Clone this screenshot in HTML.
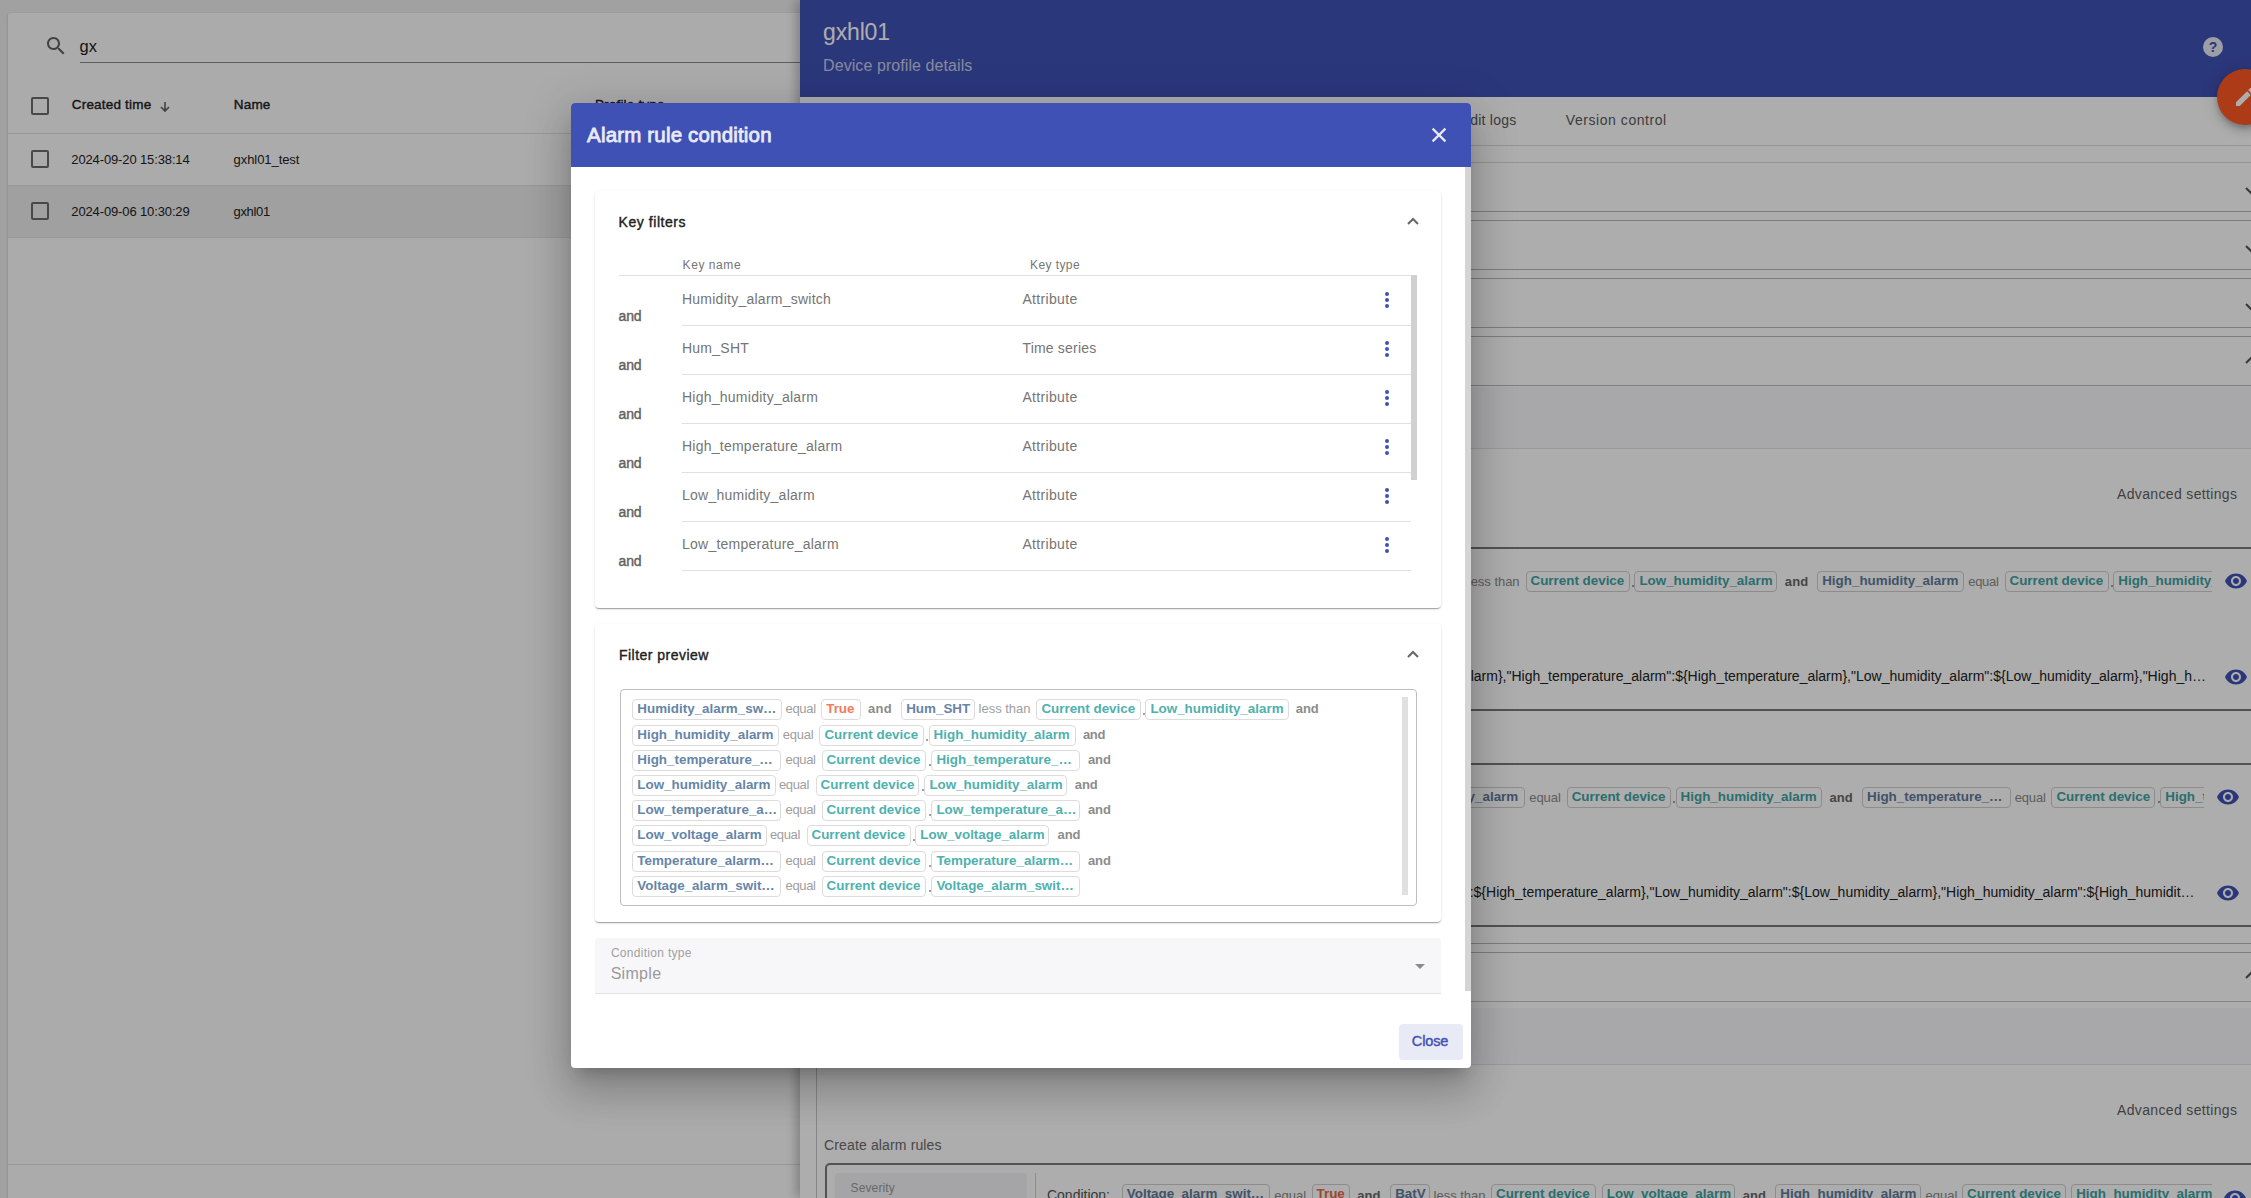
<!DOCTYPE html>
<html><head><meta charset="utf-8"><title>Alarm rule condition</title>
<style>
html,body{margin:0;padding:0;width:2251px;height:1198px;overflow:hidden;background:#eeeeee;}
body{position:relative;font-family:"Liberation Sans",sans-serif;}
div{box-sizing:border-box;white-space:nowrap;}
.c{position:absolute;height:21px;border:1px solid #dcdcdc;border-radius:4px;font-size:13.4px;font-weight:700;line-height:17px;padding-left:4px;overflow:hidden;box-sizing:border-box;}
.k{color:#6685a8;}
.v{color:#4fb1ae;}
.o{color:#f27b5d;}
.rk{color:#617b9a;border-color:#cfcfcf}
.rv{color:#3fa3a3;border-color:#cfcfcf}
.ro{color:#e8674a;border-color:#cfcfcf}
.dot{position:absolute;width:2px;height:2px;background:#a0a0a0}
</style></head><body>
<div style="position:absolute;left:8px;top:13px;width:800px;height:1200px;background:#fdfdfd;border-radius:2px;box-shadow:0 1px 3px rgba(0,0,0,.2)"></div>
<svg style="position:absolute;left:43.5px;top:34px" width="24" height="24" viewBox="0 0 24 24"><path fill="#616161" d="M15.5 14h-.79l-.28-.27C15.41 12.59 16 11.11 16 9.5 16 5.91 13.09 3 9.5 3S3 5.91 3 9.5 5.91 16 9.5 16c1.61 0 3.090-.59 4.23-1.57l.27.28v.79l5 4.99L20.49 19l-4.99-5zm-6 0C7.01 14 5 11.99 5 9.5S7.01 5 9.5 5 14 7.01 14 9.5 11.99 14 9.5 14z"/></svg>
<div style="position:absolute;left:79.61px;top:38.33px;font-size:16.5px;font-weight:400;line-height:16.5px;color:#212121;letter-spacing:0.000px;">gx</div>
<div style="position:absolute;left:80px;top:62px;width:720px;height:1px;background:#8a8a8a"></div>
<div style="position:absolute;left:31px;top:97px;width:18px;height:18px;border:2px solid #6b6b6b;border-radius:2px"></div>
<div style="position:absolute;left:71.79px;top:98.27px;font-size:13.5px;font-weight:400;line-height:13.5px;color:#212121;letter-spacing:0.191px;-webkit-text-stroke:0.38px #212121;">Created time</div>
<svg style="position:absolute;left:157px;top:99px" width="16" height="16" viewBox="0 0 16 16"><path d="M8 3v9M4 8l4 4 4-4" stroke="#616161" stroke-width="1.6" fill="none"/></svg>
<div style="position:absolute;left:233.79px;top:98.27px;font-size:13.5px;font-weight:400;line-height:13.5px;color:#212121;letter-spacing:0.195px;-webkit-text-stroke:0.38px #212121;">Name</div>
<div style="position:absolute;left:594.89px;top:98.27px;font-size:13.5px;font-weight:400;line-height:13.5px;color:#212121;letter-spacing:0.187px;-webkit-text-stroke:0.38px #212121;">Profile type</div>
<div style="position:absolute;left:8px;top:133px;width:792px;height:1px;background:#e0e0e0"></div>
<div style="position:absolute;left:31px;top:150px;width:18px;height:18px;border:2px solid #6b6b6b;border-radius:2px"></div>
<div style="position:absolute;left:71.32px;top:152.90px;font-size:13px;font-weight:400;line-height:13px;color:#212121;letter-spacing:-0.129px;">2024-09-20 15:38:14</div>
<div style="position:absolute;left:233.62px;top:152.90px;font-size:13px;font-weight:400;line-height:13px;color:#212121;letter-spacing:-0.070px;">gxhl01_test</div>
<div style="position:absolute;left:8px;top:185px;width:792px;height:1px;background:#e0e0e0"></div>
<div style="position:absolute;left:8px;top:186px;width:792px;height:51px;background:#ececec"></div>
<div style="position:absolute;left:31px;top:202px;width:18px;height:18px;border:2px solid #6b6b6b;border-radius:2px"></div>
<div style="position:absolute;left:71.32px;top:204.60px;font-size:13px;font-weight:400;line-height:13px;color:#212121;letter-spacing:-0.129px;">2024-09-06 10:30:29</div>
<div style="position:absolute;left:233.62px;top:204.60px;font-size:13px;font-weight:400;line-height:13px;color:#212121;letter-spacing:-0.362px;">gxhl01</div>
<div style="position:absolute;left:8px;top:237px;width:792px;height:1px;background:#e0e0e0"></div>
<div style="position:absolute;left:8px;top:1164px;width:792px;height:1px;background:#e0e0e0"></div>
<div style="position:absolute;left:800px;top:0px;width:1451px;height:1198px;background:#ffffff;box-shadow:-4px 0 10px rgba(0,0,0,.25)"></div>
<div style="position:absolute;left:800px;top:0px;width:1451px;height:97px;background:#3f51b5"></div>
<div style="position:absolute;left:823.02px;top:21.33px;font-size:23px;font-weight:400;line-height:23px;color:#ffffff;letter-spacing:-0.156px;">gxhl01</div>
<div style="position:absolute;left:823.04px;top:58.06px;font-size:16px;font-weight:400;line-height:16px;color:rgba(255,255,255,.72);letter-spacing:0.080px;">Device profile details</div>
<svg style="position:absolute;left:2201px;top:35px" width="24" height="24" viewBox="0 0 24 24"><circle cx="12" cy="12" r="10" fill="rgba(255,255,255,.88)"/><text x="12" y="17" text-anchor="middle" font-family="Liberation Sans" font-weight="bold" font-size="14" fill="#3f51b5">?</text></svg>
<div style="position:absolute;left:1452.66px;top:113.15px;font-size:14px;font-weight:400;line-height:14px;color:#5a5a5a;letter-spacing:0.224px;">Audit logs</div>
<div style="position:absolute;left:1565.86px;top:113.15px;font-size:14px;font-weight:400;line-height:14px;color:#5a5a5a;letter-spacing:0.549px;">Version control</div>
<div style="position:absolute;left:800px;top:145px;width:1451px;height:1px;background:#dadada"></div>
<div style="position:absolute;left:800px;top:162px;width:1451px;height:1px;background:#dadada"></div>
<div style="position:absolute;left:800px;top:211px;width:1451px;height:1px;background:#b8b8b8"></div>
<div style="position:absolute;left:800px;top:220px;width:1451px;height:1px;background:#b8b8b8"></div>
<div style="position:absolute;left:800px;top:269px;width:1451px;height:1px;background:#b8b8b8"></div>
<div style="position:absolute;left:800px;top:278px;width:1451px;height:1px;background:#b8b8b8"></div>
<div style="position:absolute;left:800px;top:327px;width:1451px;height:1px;background:#b8b8b8"></div>
<div style="position:absolute;left:800px;top:336px;width:1451px;height:1px;background:#b8b8b8"></div>
<div style="position:absolute;left:800px;top:385px;width:1451px;height:1px;background:#b8b8b8"></div>
<svg style="position:absolute;left:2243px;top:182px" width="16" height="16" viewBox="-8 -8 16 16"><path d="M-5 -2L0 3L5 -2" stroke="#555" stroke-width="2" fill="none"/></svg>
<svg style="position:absolute;left:2243px;top:240px" width="16" height="16" viewBox="-8 -8 16 16"><path d="M-5 -2L0 3L5 -2" stroke="#555" stroke-width="2" fill="none"/></svg>
<svg style="position:absolute;left:2243px;top:298px" width="16" height="16" viewBox="-8 -8 16 16"><path d="M-5 -2L0 3L5 -2" stroke="#555" stroke-width="2" fill="none"/></svg>
<svg style="position:absolute;left:2243px;top:352px" width="16" height="16" viewBox="-8 -8 16 16"><path d="M-5 3L0 -2L5 3" stroke="#555" stroke-width="2" fill="none"/></svg>
<div style="position:absolute;left:800px;top:387px;width:1451px;height:61px;background:#f8f8fb"></div>
<div style="position:absolute;left:800px;top:448px;width:1451px;height:1px;background:#e2e2e2"></div>
<div style="position:absolute;left:2117.06px;top:487.15px;font-size:14px;font-weight:400;line-height:14px;color:#5f5f5f;letter-spacing:0.343px;">Advanced settings</div>
<div style="position:absolute;left:800px;top:547px;width:1451px;height:2px;background:#7a7a7a"></div>
<div style="position:absolute;left:1400.80px;top:574.66px;font-size:13.4px;font-weight:700;line-height:13.4px;color:#617b9a;letter-spacing:0.000px;">Hum_SHT</div>
<div style="position:absolute;left:1467.82px;top:575.00px;font-size:13px;font-weight:400;line-height:13px;color:#8a8a8a;letter-spacing:-0.031px;">less than</div>
<div class="c rv" style="left:1525.5px;top:571px;width:104px;height:21px">Current device</div>
<div class="dot" style="left:1632px;top:585px"></div>
<div class="c rv" style="left:1634.4px;top:571px;width:143px;height:21px">Low_humidity_alarm</div>
<div style="position:absolute;left:1784.82px;top:575.00px;font-size:13px;font-weight:700;line-height:13px;color:#666666;letter-spacing:0.088px;">and</div>
<div class="c rk" style="left:1817.2px;top:571px;width:147px;height:21px">High_humidity_alarm</div>
<div style="position:absolute;left:1968.22px;top:575.00px;font-size:13px;font-weight:400;line-height:13px;color:#8a8a8a;letter-spacing:-0.278px;">equal</div>
<div class="c rv" style="left:2004.5px;top:571px;width:104px;height:21px">Current device</div>
<div class="dot" style="left:2111px;top:585px"></div>
<div style="position:absolute;left:2113.3px;top:571px;width:98.3px;height:21px;overflow:hidden"><div class="c rv" style="left:0;top:0;width:147px">High_humidity_alarm</div></div>
<svg style="position:absolute;left:2223.6px;top:569px" width="24" height="24" viewBox="0 0 24 24"><path fill="#3f51b5" d="M12 4.5C7 4.5 2.73 7.61 1 12c1.73 4.39 6 7.5 11 7.5s9.27-3.11 11-7.5c-1.73-4.39-6-7.5-11-7.5zM12 17c-2.76 0-5-2.24-5-5s2.24-5 5-5 5 2.24 5 5-2.24 5-5 5zm0-8c-1.66 0-3 1.34-3 3s1.34 3 3 3 3-1.34 3-3-1.34-3-3-3z"/></svg>
<div style="position:absolute;left:1300px;top:664px;width:906px;height:24px;overflow:hidden"><div style="position:absolute;right:0;top:0;line-height:24px;font-size:14px;color:#212121">Low_humidity_alarm},&quot;High_humidity_alarm&quot;:${High_humidity_alarm},&quot;High_temperature_alarm&quot;:${High_temperature_alarm},&quot;Low_humidity_alarm&quot;:${Low_humidity_alarm},&quot;High_h…</div></div>
<svg style="position:absolute;left:2223.6px;top:665px" width="24" height="24" viewBox="0 0 24 24"><path fill="#3f51b5" d="M12 4.5C7 4.5 2.73 7.61 1 12c1.73 4.39 6 7.5 11 7.5s9.27-3.11 11-7.5c-1.73-4.39-6-7.5-11-7.5zM12 17c-2.76 0-5-2.24-5-5s2.24-5 5-5 5 2.24 5 5-2.24 5-5 5zm0-8c-1.66 0-3 1.34-3 3s1.34 3 3 3 3-1.34 3-3-1.34-3-3-3z"/></svg>
<div style="position:absolute;left:800px;top:709px;width:1451px;height:2px;background:#7a7a7a"></div>
<div style="position:absolute;left:800px;top:763px;width:1451px;height:2px;background:#7a7a7a"></div>
<div class="c rk" style="left:1380px;top:787px;width:145px;height:21px">Low_humidity_alarm</div>
<div style="position:absolute;left:1529.22px;top:791.00px;font-size:13px;font-weight:400;line-height:13px;color:#8a8a8a;letter-spacing:-0.053px;">equal</div>
<div class="c rv" style="left:1566.7px;top:787px;width:104px;height:21px">Current device</div>
<div class="dot" style="left:1673px;top:801px"></div>
<div class="c rv" style="left:1675.6px;top:787px;width:146px;height:21px">High_humidity_alarm</div>
<div style="position:absolute;left:1829.62px;top:791.00px;font-size:13px;font-weight:700;line-height:13px;color:#666666;letter-spacing:-0.012px;">and</div>
<div class="c rk" style="left:1862px;top:787px;width:149px;height:21px">High_temperature_…</div>
<div style="position:absolute;left:2014.82px;top:791.00px;font-size:13px;font-weight:400;line-height:13px;color:#8a8a8a;letter-spacing:-0.203px;">equal</div>
<div class="c rv" style="left:2051.4px;top:787px;width:104px;height:21px">Current device</div>
<div class="dot" style="left:2158px;top:801px"></div>
<div style="position:absolute;left:2160.3px;top:787px;width:43.5px;height:21px;overflow:hidden"><div class="c rv" style="left:0;top:0;width:149px">High_temperature_…</div></div>
<svg style="position:absolute;left:2215.6px;top:784.5px" width="24" height="24" viewBox="0 0 24 24"><path fill="#3f51b5" d="M12 4.5C7 4.5 2.73 7.61 1 12c1.73 4.39 6 7.5 11 7.5s9.27-3.11 11-7.5c-1.73-4.39-6-7.5-11-7.5zM12 17c-2.76 0-5-2.24-5-5s2.24-5 5-5 5 2.24 5 5-2.24 5-5 5zm0-8c-1.66 0-3 1.34-3 3s1.34 3 3 3 3-1.34 3-3-1.34-3-3-3z"/></svg>
<div style="position:absolute;left:1300px;top:880px;width:894.6px;height:24px;overflow:hidden"><div style="position:absolute;right:0;top:0;line-height:24px;font-size:14px;color:#212121">Low_humidity_alarm},&quot;High_temperature_alarm&quot;:${High_temperature_alarm},&quot;Low_humidity_alarm&quot;:${Low_humidity_alarm},&quot;High_humidity_alarm&quot;:${High_humidit…</div></div>
<svg style="position:absolute;left:2215.6px;top:881px" width="24" height="24" viewBox="0 0 24 24"><path fill="#3f51b5" d="M12 4.5C7 4.5 2.73 7.61 1 12c1.73 4.39 6 7.5 11 7.5s9.27-3.11 11-7.5c-1.73-4.39-6-7.5-11-7.5zM12 17c-2.76 0-5-2.24-5-5s2.24-5 5-5 5 2.24 5 5-2.24 5-5 5zm0-8c-1.66 0-3 1.34-3 3s1.34 3 3 3 3-1.34 3-3-1.34-3-3-3z"/></svg>
<div style="position:absolute;left:800px;top:925px;width:1451px;height:2px;background:#7a7a7a"></div>
<div style="position:absolute;left:800px;top:943px;width:1451px;height:1px;background:#b8b8b8"></div>
<div style="position:absolute;left:800px;top:952px;width:1451px;height:1px;background:#b8b8b8"></div>
<svg style="position:absolute;left:2243px;top:967px" width="16" height="16" viewBox="-8 -8 16 16"><path d="M-5 3L0 -2L5 3" stroke="#555" stroke-width="2" fill="none"/></svg>
<div style="position:absolute;left:800px;top:1001px;width:1451px;height:1px;background:#c8c8c8"></div>
<div style="position:absolute;left:800px;top:1008px;width:1451px;height:56px;background:#f8f8fb"></div>
<div style="position:absolute;left:800px;top:1064px;width:1451px;height:1px;background:#e2e2e2"></div>
<div style="position:absolute;left:815.5px;top:953px;width:1px;height:245px;background:#c8c8c8"></div>
<div style="position:absolute;left:2117.06px;top:1103.15px;font-size:14px;font-weight:400;line-height:14px;color:#5f5f5f;letter-spacing:0.343px;">Advanced settings</div>
<div style="position:absolute;left:824.06px;top:1137.65px;font-size:14px;font-weight:400;line-height:14px;color:#6a6a6a;letter-spacing:0.138px;">Create alarm rules</div>
<div style="position:absolute;left:825px;top:1163px;width:1500px;height:60px;border:2px solid #7a7a7a;border-radius:5px"></div>
<div style="position:absolute;left:835px;top:1173px;width:192px;height:40px;background:#f3f3f6;border-radius:4px 4px 0 0"></div>
<div style="position:absolute;left:850.58px;top:1181.84px;font-size:12px;font-weight:400;line-height:12px;color:#9a9a9a;letter-spacing:0.120px;">Severity</div>
<div style="position:absolute;left:1035px;top:1173px;width:1px;height:30px;background:#d0d0d0"></div>
<div style="position:absolute;left:1046.96px;top:1188.15px;font-size:14px;font-weight:400;line-height:14px;color:#555555;letter-spacing:0.000px;">Condition:</div>
<div class="c rk" style="left:1121.8px;top:1184px;width:148px;height:21px">Voltage_alarm_swit…</div>
<div style="position:absolute;left:1274.22px;top:1189.00px;font-size:13px;font-weight:400;line-height:13px;color:#8a8a8a;letter-spacing:0.000px;">equal</div>
<div class="c ro" style="left:1311.5px;top:1184px;width:38px;height:21px">True</div>
<div style="position:absolute;left:1357.32px;top:1189.00px;font-size:13px;font-weight:700;line-height:13px;color:#666666;letter-spacing:0.000px;">and</div>
<div class="c rk" style="left:1390.2px;top:1184px;width:40px;height:21px">BatV</div>
<div style="position:absolute;left:1433.52px;top:1189.00px;font-size:13px;font-weight:400;line-height:13px;color:#8a8a8a;letter-spacing:0.000px;">less than</div>
<div class="c rv" style="left:1491px;top:1184px;width:105px;height:21px">Current device</div>
<div class="c rv" style="left:1601.8px;top:1184px;width:133px;height:21px">Low_voltage_alarm</div>
<div style="position:absolute;left:1742.82px;top:1189.00px;font-size:13px;font-weight:700;line-height:13px;color:#666666;letter-spacing:0.000px;">and</div>
<div class="c rk" style="left:1775.3px;top:1184px;width:146px;height:21px">High_humidity_alarm</div>
<div style="position:absolute;left:1925.62px;top:1189.00px;font-size:13px;font-weight:400;line-height:13px;color:#8a8a8a;letter-spacing:0.000px;">equal</div>
<div class="c rv" style="left:1962.1px;top:1184px;width:104px;height:21px">Current device</div>
<div style="position:absolute;left:2071.2px;top:1184px;width:141px;height:21px;overflow:hidden"><div class="c rv" style="left:0;top:0;width:147px">High_humidity_alarm</div></div>
<svg style="position:absolute;left:2223px;top:1186px" width="24" height="24" viewBox="0 0 24 24"><path fill="#3f51b5" d="M12 4.5C7 4.5 2.73 7.61 1 12c1.73 4.39 6 7.5 11 7.5s9.27-3.11 11-7.5c-1.73-4.39-6-7.5-11-7.5zM12 17c-2.76 0-5-2.24-5-5s2.24-5 5-5 5 2.24 5 5-2.24 5-5 5zm0-8c-1.66 0-3 1.34-3 3s1.34 3 3 3 3-1.34 3-3-1.34-3-3-3z"/></svg>
<div style="position:absolute;left:2217px;top:69px;width:56px;height:56px;border-radius:50%;background:#ff5722;box-shadow:0 3px 5px -1px rgba(0,0,0,.2),0 6px 10px 0 rgba(0,0,0,.14),0 1px 18px 0 rgba(0,0,0,.12)"></div>
<svg style="position:absolute;left:2233px;top:85px" width="24" height="24" viewBox="0 0 24 24"><path fill="#fff" d="M3 17.25V21h3.75L17.81 9.94l-3.75-3.75L3 17.25zM20.71 7.04c.39-.39.39-1.02 0-1.41l-2.34-2.34c-.39-.39-1.02-.39-1.41 0l-1.83 1.83 3.75 3.75 1.83-1.83z"/></svg>
<div style="position:absolute;left:0px;top:0px;width:2251px;height:1198px;background:rgba(0,0,0,.32)"></div>
<div style="position:absolute;left:571px;top:103px;width:900px;height:964.5px;background:#fff;border-radius:4px;box-shadow:0 11px 15px -7px rgba(0,0,0,.2),0 24px 38px 3px rgba(0,0,0,.14),0 9px 46px 8px rgba(0,0,0,.12)"></div>
<div style="position:absolute;left:571px;top:103px;width:900px;height:64px;background:#3f51b5;border-radius:4px 4px 0 0"></div>
<div style="position:absolute;left:587.07px;top:124.55px;font-size:20.5px;font-weight:400;line-height:20.5px;color:#e8eaf6;letter-spacing:0.175px;-webkit-text-stroke:0.82px #e8eaf6;">Alarm rule condition</div>
<svg style="position:absolute;left:1427px;top:123px" width="24" height="24" viewBox="0 0 24 24"><path stroke="#e8eaf6" stroke-width="2.2" stroke-linecap="butt" d="M5.6 5.6L18.4 18.4M18.4 5.6L5.6 18.4"/></svg>
<div style="position:absolute;left:1465px;top:167px;width:6px;height:824px;background:#d4d4d4"></div>
<div style="position:absolute;left:595px;top:191px;width:846px;height:417px;background:#fff;border-radius:4px;box-shadow:0 2px 1px -1px rgba(0,0,0,.2),0 1px 1px 0 rgba(0,0,0,.14),0 1px 3px 0 rgba(0,0,0,.12)"></div>
<div style="position:absolute;left:618.56px;top:215.15px;font-size:14px;font-weight:400;line-height:14px;color:#212121;letter-spacing:0.553px;-webkit-text-stroke:0.39px #212121;">Key filters</div>
<svg style="position:absolute;left:1405px;top:213px" width="16" height="16" viewBox="-8 -8 16 16"><path d="M-5 3L0 -2L5 3" stroke="#666" stroke-width="2" fill="none"/></svg>
<div style="position:absolute;left:682.58px;top:258.84px;font-size:12px;font-weight:400;line-height:12px;color:#757575;letter-spacing:0.567px;">Key name</div>
<div style="position:absolute;left:1029.98px;top:258.84px;font-size:12px;font-weight:400;line-height:12px;color:#757575;letter-spacing:0.414px;">Key type</div>
<div style="position:absolute;left:619px;top:275px;width:798px;height:1px;background:#e0e0e0"></div>
<div style="position:absolute;left:681.96px;top:292.05px;font-size:14px;font-weight:400;line-height:14px;color:#757575;letter-spacing:0.000px;letter-spacing:0.25px">Humidity_alarm_switch</div>
<div style="position:absolute;left:1022.46px;top:291.85px;font-size:14px;font-weight:400;line-height:14px;color:#757575;letter-spacing:0.332px;">Attribute</div>
<div style="position:absolute;left:618.56px;top:308.65px;font-size:14px;font-weight:400;line-height:14px;color:#616161;letter-spacing:-0.180px;-webkit-text-stroke:0.39px #616161;">and</div>
<div style="position:absolute;left:682px;top:324.5px;width:729px;height:1px;background:#e0e0e0"></div>
<div style="position:absolute;left:1385px;top:292.0px;width:4px;height:4px;background:#3f51b5;border-radius:50%"></div>
<div style="position:absolute;left:1385px;top:298.0px;width:4px;height:4px;background:#3f51b5;border-radius:50%"></div>
<div style="position:absolute;left:1385px;top:304.0px;width:4px;height:4px;background:#3f51b5;border-radius:50%"></div>
<div style="position:absolute;left:681.96px;top:341.05px;font-size:14px;font-weight:400;line-height:14px;color:#757575;letter-spacing:0.000px;letter-spacing:0.25px">Hum_SHT</div>
<div style="position:absolute;left:1022.46px;top:340.85px;font-size:14px;font-weight:400;line-height:14px;color:#757575;letter-spacing:0.187px;">Time series</div>
<div style="position:absolute;left:618.56px;top:357.65px;font-size:14px;font-weight:400;line-height:14px;color:#616161;letter-spacing:-0.180px;-webkit-text-stroke:0.39px #616161;">and</div>
<div style="position:absolute;left:682px;top:373.5px;width:729px;height:1px;background:#e0e0e0"></div>
<div style="position:absolute;left:1385px;top:341.0px;width:4px;height:4px;background:#3f51b5;border-radius:50%"></div>
<div style="position:absolute;left:1385px;top:347.0px;width:4px;height:4px;background:#3f51b5;border-radius:50%"></div>
<div style="position:absolute;left:1385px;top:353.0px;width:4px;height:4px;background:#3f51b5;border-radius:50%"></div>
<div style="position:absolute;left:681.96px;top:390.05px;font-size:14px;font-weight:400;line-height:14px;color:#757575;letter-spacing:0.000px;letter-spacing:0.25px">High_humidity_alarm</div>
<div style="position:absolute;left:1022.46px;top:389.85px;font-size:14px;font-weight:400;line-height:14px;color:#757575;letter-spacing:0.332px;">Attribute</div>
<div style="position:absolute;left:618.56px;top:406.65px;font-size:14px;font-weight:400;line-height:14px;color:#616161;letter-spacing:-0.180px;-webkit-text-stroke:0.39px #616161;">and</div>
<div style="position:absolute;left:682px;top:422.5px;width:729px;height:1px;background:#e0e0e0"></div>
<div style="position:absolute;left:1385px;top:390.0px;width:4px;height:4px;background:#3f51b5;border-radius:50%"></div>
<div style="position:absolute;left:1385px;top:396.0px;width:4px;height:4px;background:#3f51b5;border-radius:50%"></div>
<div style="position:absolute;left:1385px;top:402.0px;width:4px;height:4px;background:#3f51b5;border-radius:50%"></div>
<div style="position:absolute;left:681.96px;top:439.05px;font-size:14px;font-weight:400;line-height:14px;color:#757575;letter-spacing:0.000px;letter-spacing:0.25px">High_temperature_alarm</div>
<div style="position:absolute;left:1022.46px;top:438.85px;font-size:14px;font-weight:400;line-height:14px;color:#757575;letter-spacing:0.332px;">Attribute</div>
<div style="position:absolute;left:618.56px;top:455.65px;font-size:14px;font-weight:400;line-height:14px;color:#616161;letter-spacing:-0.180px;-webkit-text-stroke:0.39px #616161;">and</div>
<div style="position:absolute;left:682px;top:471.5px;width:729px;height:1px;background:#e0e0e0"></div>
<div style="position:absolute;left:1385px;top:439.0px;width:4px;height:4px;background:#3f51b5;border-radius:50%"></div>
<div style="position:absolute;left:1385px;top:445.0px;width:4px;height:4px;background:#3f51b5;border-radius:50%"></div>
<div style="position:absolute;left:1385px;top:451.0px;width:4px;height:4px;background:#3f51b5;border-radius:50%"></div>
<div style="position:absolute;left:681.96px;top:488.05px;font-size:14px;font-weight:400;line-height:14px;color:#757575;letter-spacing:0.000px;letter-spacing:0.25px">Low_humidity_alarm</div>
<div style="position:absolute;left:1022.46px;top:487.85px;font-size:14px;font-weight:400;line-height:14px;color:#757575;letter-spacing:0.332px;">Attribute</div>
<div style="position:absolute;left:618.56px;top:504.65px;font-size:14px;font-weight:400;line-height:14px;color:#616161;letter-spacing:-0.180px;-webkit-text-stroke:0.39px #616161;">and</div>
<div style="position:absolute;left:682px;top:520.5px;width:729px;height:1px;background:#e0e0e0"></div>
<div style="position:absolute;left:1385px;top:488.0px;width:4px;height:4px;background:#3f51b5;border-radius:50%"></div>
<div style="position:absolute;left:1385px;top:494.0px;width:4px;height:4px;background:#3f51b5;border-radius:50%"></div>
<div style="position:absolute;left:1385px;top:500.0px;width:4px;height:4px;background:#3f51b5;border-radius:50%"></div>
<div style="position:absolute;left:681.96px;top:537.05px;font-size:14px;font-weight:400;line-height:14px;color:#757575;letter-spacing:0.000px;letter-spacing:0.25px">Low_temperature_alarm</div>
<div style="position:absolute;left:1022.46px;top:536.85px;font-size:14px;font-weight:400;line-height:14px;color:#757575;letter-spacing:0.332px;">Attribute</div>
<div style="position:absolute;left:618.56px;top:553.65px;font-size:14px;font-weight:400;line-height:14px;color:#616161;letter-spacing:-0.180px;-webkit-text-stroke:0.39px #616161;">and</div>
<div style="position:absolute;left:682px;top:569.5px;width:729px;height:1px;background:#e0e0e0"></div>
<div style="position:absolute;left:1385px;top:537.0px;width:4px;height:4px;background:#3f51b5;border-radius:50%"></div>
<div style="position:absolute;left:1385px;top:543.0px;width:4px;height:4px;background:#3f51b5;border-radius:50%"></div>
<div style="position:absolute;left:1385px;top:549.0px;width:4px;height:4px;background:#3f51b5;border-radius:50%"></div>
<div style="position:absolute;left:1411px;top:275px;width:6px;height:205px;background:#d0d0d0"></div>
<div style="position:absolute;left:595px;top:624px;width:846px;height:298px;background:#fff;border-radius:4px;box-shadow:0 2px 1px -1px rgba(0,0,0,.2),0 1px 1px 0 rgba(0,0,0,.14),0 1px 3px 0 rgba(0,0,0,.12)"></div>
<div style="position:absolute;left:618.96px;top:647.95px;font-size:14px;font-weight:400;line-height:14px;color:#212121;letter-spacing:0.473px;-webkit-text-stroke:0.39px #212121;">Filter preview</div>
<svg style="position:absolute;left:1405px;top:646px" width="16" height="16" viewBox="-8 -8 16 16"><path d="M-5 3L0 -2L5 3" stroke="#666" stroke-width="2" fill="none"/></svg>
<div style="position:absolute;left:619.5px;top:688.5px;width:797.5px;height:217.5px;border:1px solid #bdbdbd;border-radius:4px"></div>
<div style="position:absolute;left:1402px;top:697px;width:6px;height:198px;background:#e0e0e0"></div>
<div class="c k" style="left:632.3px;top:699px;width:149.3px;height:21px">Humidity_alarm_sw…</div>
<div style="position:absolute;left:785.42px;top:701.80px;font-size:13px;font-weight:400;line-height:13px;color:#9e9e9e;letter-spacing:-0.253px;">equal</div>
<div class="c o" style="left:821.2px;top:699px;width:39.4px;height:21px">True</div>
<div style="position:absolute;left:868.12px;top:701.80px;font-size:13px;font-weight:700;line-height:13px;color:#8c8c8c;letter-spacing:0.238px;">and</div>
<div class="c k" style="left:901.2px;top:699px;width:73.4px;height:21px">Hum_SHT</div>
<div style="position:absolute;left:978.62px;top:701.80px;font-size:13px;font-weight:400;line-height:13px;color:#9e9e9e;letter-spacing:-0.031px;">less than</div>
<div class="c v" style="left:1036.4px;top:699px;width:104.2px;height:21px">Current device</div>
<div class="dot" style="left:1142.5px;top:713px"></div>
<div class="c v" style="left:1145.4px;top:699px;width:143.2px;height:21px">Low_humidity_alarm</div>
<div style="position:absolute;left:1295.82px;top:701.80px;font-size:13px;font-weight:700;line-height:13px;color:#8c8c8c;letter-spacing:-0.113px;">and</div>
<div class="c k" style="left:632.3px;top:725px;width:146.3px;height:21px">High_humidity_alarm</div>
<div style="position:absolute;left:782.72px;top:727.80px;font-size:13px;font-weight:400;line-height:13px;color:#9e9e9e;letter-spacing:-0.253px;">equal</div>
<div class="c v" style="left:819.4px;top:725px;width:104.2px;height:21px">Current device</div>
<div class="dot" style="left:925.5px;top:739px"></div>
<div class="c v" style="left:928.6px;top:725px;width:147px;height:21px">High_humidity_alarm</div>
<div style="position:absolute;left:1082.92px;top:727.80px;font-size:13px;font-weight:700;line-height:13px;color:#8c8c8c;letter-spacing:-0.312px;">and</div>
<div class="c k" style="left:632.3px;top:750px;width:149.1px;height:21px">High_temperature_…</div>
<div style="position:absolute;left:785.52px;top:752.80px;font-size:13px;font-weight:400;line-height:13px;color:#9e9e9e;letter-spacing:-0.353px;">equal</div>
<div class="c v" style="left:821.6px;top:750px;width:104.7px;height:21px">Current device</div>
<div class="dot" style="left:928.5px;top:764px"></div>
<div class="c v" style="left:931.4px;top:750px;width:149.1px;height:21px">High_temperature_…</div>
<div style="position:absolute;left:1087.92px;top:752.80px;font-size:13px;font-weight:700;line-height:13px;color:#8c8c8c;letter-spacing:-0.062px;">and</div>
<div class="c k" style="left:632.3px;top:775px;width:143.3px;height:21px">Low_humidity_alarm</div>
<div style="position:absolute;left:778.92px;top:777.80px;font-size:13px;font-weight:400;line-height:13px;color:#9e9e9e;letter-spacing:-0.353px;">equal</div>
<div class="c v" style="left:815.6px;top:775px;width:103.8px;height:21px">Current device</div>
<div class="dot" style="left:921.5px;top:789px"></div>
<div class="c v" style="left:924.4px;top:775px;width:143px;height:21px">Low_humidity_alarm</div>
<div style="position:absolute;left:1074.82px;top:777.80px;font-size:13px;font-weight:700;line-height:13px;color:#8c8c8c;letter-spacing:-0.062px;">and</div>
<div class="c k" style="left:632.3px;top:800px;width:149.1px;height:21px">Low_temperature_a…</div>
<div style="position:absolute;left:785.52px;top:802.80px;font-size:13px;font-weight:400;line-height:13px;color:#9e9e9e;letter-spacing:-0.353px;">equal</div>
<div class="c v" style="left:821.6px;top:800px;width:104.7px;height:21px">Current device</div>
<div class="dot" style="left:928.5px;top:814px"></div>
<div class="c v" style="left:931.4px;top:800px;width:149.1px;height:21px">Low_temperature_a…</div>
<div style="position:absolute;left:1087.92px;top:802.80px;font-size:13px;font-weight:700;line-height:13px;color:#8c8c8c;letter-spacing:-0.062px;">and</div>
<div class="c k" style="left:632.3px;top:825px;width:134.3px;height:21px">Low_voltage_alarm</div>
<div style="position:absolute;left:769.92px;top:827.80px;font-size:13px;font-weight:400;line-height:13px;color:#9e9e9e;letter-spacing:-0.353px;">equal</div>
<div class="c v" style="left:806.5px;top:825px;width:104.7px;height:21px">Current device</div>
<div class="dot" style="left:912.5px;top:839px"></div>
<div class="c v" style="left:915.3px;top:825px;width:134px;height:21px">Low_voltage_alarm</div>
<div style="position:absolute;left:1057.52px;top:827.80px;font-size:13px;font-weight:700;line-height:13px;color:#8c8c8c;letter-spacing:-0.062px;">and</div>
<div class="c k" style="left:632.3px;top:851px;width:149.1px;height:21px">Temperature_alarm…</div>
<div style="position:absolute;left:785.52px;top:853.80px;font-size:13px;font-weight:400;line-height:13px;color:#9e9e9e;letter-spacing:-0.353px;">equal</div>
<div class="c v" style="left:821.6px;top:851px;width:104.7px;height:21px">Current device</div>
<div class="dot" style="left:928.5px;top:865px"></div>
<div class="c v" style="left:931.4px;top:851px;width:149.1px;height:21px">Temperature_alarm…</div>
<div style="position:absolute;left:1087.92px;top:853.80px;font-size:13px;font-weight:700;line-height:13px;color:#8c8c8c;letter-spacing:-0.062px;">and</div>
<div class="c k" style="left:632.3px;top:876px;width:149.1px;height:21px">Voltage_alarm_swit…</div>
<div style="position:absolute;left:785.52px;top:878.80px;font-size:13px;font-weight:400;line-height:13px;color:#9e9e9e;letter-spacing:-0.353px;">equal</div>
<div class="c v" style="left:821.6px;top:876px;width:104.7px;height:21px">Current device</div>
<div class="dot" style="left:928.5px;top:890px"></div>
<div class="c v" style="left:931.4px;top:876px;width:149.1px;height:21px">Voltage_alarm_swit…</div>
<div style="position:absolute;left:595px;top:938px;width:846px;height:56px;background:#f7f7f9;border-radius:4px 4px 0 0;border-bottom:1px solid #e3e3e6"></div>
<div style="position:absolute;left:610.88px;top:946.84px;font-size:12px;font-weight:400;line-height:12px;color:#a0a0a0;letter-spacing:0.299px;">Condition type</div>
<div style="position:absolute;left:610.64px;top:966.26px;font-size:16px;font-weight:400;line-height:16px;color:#9a9a9a;letter-spacing:0.299px;">Simple</div>
<svg style="position:absolute;left:1410px;top:959px" width="20" height="15" viewBox="0 0 20 15"><path d="M5 5h10l-5 5z" fill="#8a8a8a"/></svg>
<div style="position:absolute;left:1399.4px;top:1024px;width:63.4px;height:35.5px;background:#e8eaf6;border-radius:4px"></div>
<div style="position:absolute;left:1411.83px;top:1033.53px;font-size:14.5px;font-weight:400;line-height:14.5px;color:#3f51b5;letter-spacing:-0.145px;-webkit-text-stroke:0.41px #3f51b5;">Close</div>
</body></html>
